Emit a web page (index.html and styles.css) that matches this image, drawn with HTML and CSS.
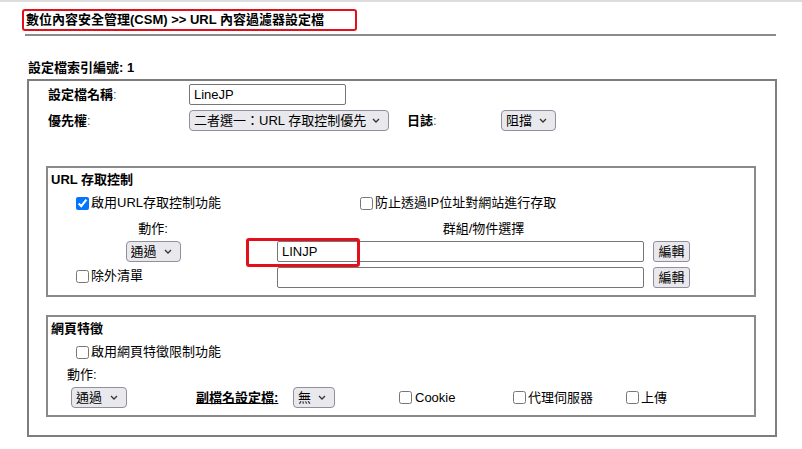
FILE: index.html
```html
<!DOCTYPE html>
<html lang="zh-Hant">
<head>
    <meta charset="UTF-8">
    <title>URL 內容過濾器設定檔</title>
    <link rel="stylesheet" href="styles.css">
</head>
<body>
    <div class="topbar"></div>
    <div class="head">
        <div class="title">數位內容安全管理(CSM) &gt;&gt; URL 內容過濾器設定檔</div>
    </div>
    <div class="rule"></div>
    <div class="index">設定檔索引編號: 1</div>

    <div class="panel">
        <div class="row first">
            <span class="label">設定檔名稱<i>:</i></span>
            <input type="text" class="text name" value="LineJP">
        </div>
        <div class="row gap">
            <span class="label">優先權<i>:</i></span>
            <span class="sel prio">
                <select><option>二者選一：URL 存取控制優先</option></select>
                <svg width="8" height="5" viewBox="0 0 8 5"><polyline points="1,1 4,4 7,1" /></svg>
            </span>
            <span class="label log">日誌<i>:</i></span>
            <span class="sel block">
                <select><option>阻擋</option></select>
                <svg width="8" height="5" viewBox="0 0 8 5"><polyline points="1,1 4,4 7,1" /></svg>
            </span>
        </div>

        <!-- URL 存取控制 -->
        <div class="group url">
            <div class="group-title">URL 存取控制</div>
            <div class="cb-row">
                <label class="cb enable"><input type="checkbox" checked>啟用URL存取控制功能</label>
                <label class="cb"><input type="checkbox">防止透過IP位址對網站進行存取</label>
            </div>
            <div class="head-row">
                <span class="col-a">動作:</span>
                <span class="col-b">群組/物件選擇</span>
            </div>
            <div class="field-row">
                <span class="col-a centered">
                    <span class="sel pass">
                        <select><option>通過</option></select>
                        <svg width="8" height="5" viewBox="0 0 8 5"><polyline points="1,1 4,4 7,1" /></svg>
                    </span>
                </span>
                <span class="col-b">
                    <input type="text" class="text obj" value="LINJP">
                    <button class="btn">編輯</button>
                </span>
                <span class="mark"></span>
            </div>
            <div class="field-row gap">
                <span class="col-a">
                    <label class="cb except"><input type="checkbox">除外清單</label>
                </span>
                <span class="col-b">
                    <input type="text" class="text obj" value="">
                    <button class="btn">編輯</button>
                </span>
            </div>
        </div>

        <!-- 網頁特徵 -->
        <div class="group feature">
            <div class="group-title">網頁特徵</div>
            <div class="cb-row">
                <label class="cb"><input type="checkbox">啟用網頁特徵限制功能</label>
            </div>
            <div class="action">動作:</div>
            <div class="feature-row">
                <span class="sel pass2">
                    <select><option>通過</option></select>
                    <svg width="8" height="5" viewBox="0 0 8 5"><polyline points="1,1 4,4 7,1" /></svg>
                </span>
                <a class="ext">副檔名設定檔:</a>
                <span class="sel none">
                    <select><option>無</option></select>
                    <svg width="8" height="5" viewBox="0 0 8 5"><polyline points="1,1 4,4 7,1" /></svg>
                </span>
                <label class="cb cookie"><input type="checkbox"><span>Cookie</span></label>
                <label class="cb proxy"><input type="checkbox">代理伺服器</label>
                <label class="cb"><input type="checkbox">上傳</label>
            </div>
        </div>
    </div>
</body>
</html>
```

FILE: styles.css
```css
/* Grundlayout */
* {
    box-sizing: border-box;
}

body {
    margin: 0;
    background: #fff;
    color: #000;
    font-family: "Liberation Sans", "Noto Sans CJK TC", sans-serif;
    font-size: 13px;
    line-height: 16px;
}

.topbar {
    height: 2px;
    background: #dcdcdc;
}

/* Titel */
.head {
    margin: 7px 0 0 22px;
}

.title {
    display: inline-block;
    width: 335px;
    height: 22px;
    padding-left: 2px;
    border: 2px solid #e3101b;
    border-radius: 3px;
    font-weight: bold;
    line-height: 18px;
    white-space: nowrap;
}

.rule {
    margin: 3px 0 0 25px;
    width: 751px;
    height: 2px;
    background: #8c8c8c;
}

.index {
    margin: 24px 0 0 28px;
    font-weight: bold;
}

/* Hauptrahmen */
.panel {
    margin: 3px 0 0 27px;
    width: 750px;
    height: 358px;
    border: 2px solid #7d7d7d;
    padding: 3px 18px 0 17px;
}

.row {
    display: flex;
    align-items: center;
    height: 21px;
}

.row .label {
    width: 143px;
    padding-left: 2px;
    font-weight: bold;
}

.label i {
    font-style: normal;
    font-weight: normal;
    color: #555;
}

.row .log {
    width: 94px;
    margin-left: 18px;
    padding-left: 0;
}

.gap {
    margin-top: 5px;
}

/* Eingabefelder */
.text {
    height: 21px;
    margin: 0;
    padding: 0 4px;
    border: 1px solid #767676;
    border-radius: 2px;
    font: inherit;
    color: #000;
    background: #fff;
}

.name {
    width: 157px;
}

.obj {
    width: 367px;
}

.btn {
    width: 37px;
    height: 21px;
    margin: 0 0 0 9px;
    padding: 0;
    border: 1px solid #8f8f9d;
    border-radius: 3px;
    background: #e9e9ed;
    font: inherit;
    color: #000;
}

.sel {
    position: relative;
    display: inline-block;
    height: 21px;
}

.sel select {
    appearance: none;
    -webkit-appearance: none;
    width: 100%;
    height: 21px;
    margin: 0;
    padding: 0 0 0 4px;
    border: 1px solid #8f8f9d;
    border-radius: 4px;
    background: #e9e9ed;
    font: inherit;
    color: #000;
}

.sel svg {
    position: absolute;
    right: 9px;
    top: 8px;
    fill: none;
    stroke: #333;
    stroke-width: 1.3;
}

.prio { width: 200px; }
.block { width: 55px; }
.pass { width: 55px; }
.pass2 { width: 56px; }
.none { width: 42px; }

/* Gruppen */
.group {
    width: 710px;
    border: 2px solid #8a8a8a;
}

.url {
    margin-top: 35px;
    height: 131px;
}

.feature {
    margin-top: 18px;
    height: 102px;
}

.group-title {
    height: 24px;
    line-height: 24px;
    padding-left: 3px;
    font-weight: bold;
}

.cb-row {
    display: flex;
    align-items: center;
    height: 22px;
    padding-left: 28px;
}

.cb {
    display: inline-flex;
    align-items: center;
    white-space: nowrap;
}

.cb input {
    width: 13px;
    height: 13px;
    margin: 0 2px 0 0;
}

.enable {
    width: 284px;
}

.head-row {
    display: flex;
    height: 27px;
    padding-top: 3px;
    line-height: 24px;
}

.col-a {
    width: 210px;
    text-align: center;
}

.col-b {
    display: flex;
    align-items: center;
    margin-left: 19px;
    width: 413px;
    justify-content: center;
}

.field-row {
    position: relative;
    display: flex;
    align-items: center;
    height: 21px;
}

.field-row .col-b {
    justify-content: flex-start;
}

.centered {
    display: flex;
    justify-content: center;
}

.field-row .col-a {
    text-align: left;
}

.except {
    margin-left: 28px;
}

/* Markierung */
.mark {
    position: absolute;
    left: 198px;
    top: -3px;
    width: 114px;
    height: 29px;
    border: 3px solid #e3101b;
    border-radius: 3px;
}

.action {
    height: 24px;
    line-height: 24px;
    padding-left: 19px;
}

.feature-row {
    display: flex;
    align-items: center;
    height: 21px;
    padding-left: 23px;
}

.ext {
    margin-left: 69px;
    width: 97px;
    font-weight: bold;
    text-decoration: underline;
    color: #000;
}

.cookie {
    margin-left: 64px;
    width: 114px;
}

.cookie span {
    margin-left: 1px;
}

.proxy {
    width: 113px;
}
```
